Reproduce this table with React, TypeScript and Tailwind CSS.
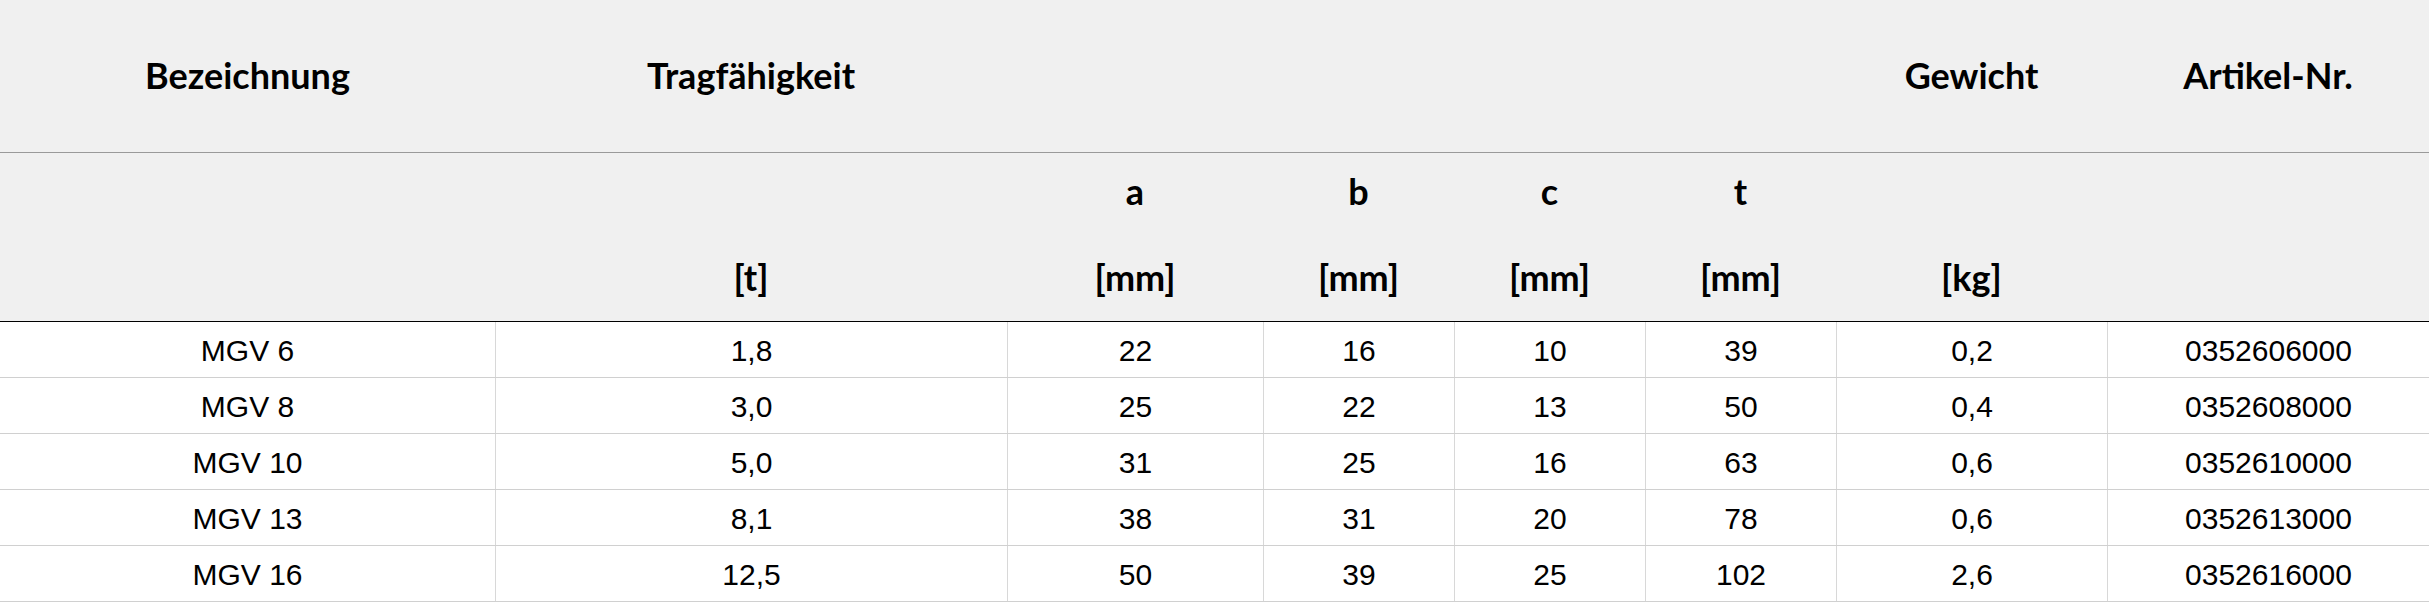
import React from "react";

const rows = [
  ["MGV 6", "1,8", "22", "16", "10", "39", "0,2", "0352606000"],
  ["MGV 8", "3,0", "25", "22", "13", "50", "0,4", "0352608000"],
  ["MGV 10", "5,0", "31", "25", "16", "63", "0,6", "0352610000"],
  ["MGV 13", "8,1", "38", "31", "20", "78", "0,6", "0352613000"],
  ["MGV 16", "12,5", "50", "39", "25", "102", "2,6", "0352616000"],
];

const top = ["Bezeichnung", "Tragfähigkeit", "", "", "", "", "Gewicht", "Artikel-Nr."];
const sym = ["", "", "a", "b", "c", "t", "", ""];
const unit = ["", "[t]", "[mm]", "[mm]", "[mm]", "[mm]", "[kg]", ""];

const cols = "grid grid-cols-[495px_512px_256px_191px_191px_191px_271px_322px]";
const head = "font-['Lato',sans-serif] font-bold text-[36px] text-black";

export default function App() {
  return (
    <div className="w-[2429px] bg-white">
      <div className={`${cols} h-[153px] bg-[#f0f0f0] border-b border-[#9a9a9a] ${head}`}>
        {top.map((t, i) => (
          <div key={i} className="flex items-center justify-center leading-none pb-[2px]">
            {t}
          </div>
        ))}
      </div>
      <div className={`${cols} h-[169px] bg-[#f0f0f0] border-b border-black ${head}`}>
        {sym.map((s, i) => (
          <div key={i} className="flex flex-col items-center">
            <div className="h-[86px] flex items-end pb-[30px] leading-none">{s}</div>
            <div className="h-[86px] flex items-end pb-[30px] leading-none">{unit[i]}</div>
          </div>
        ))}
      </div>
      {rows.map((r, ri) => (
        <div
          key={ri}
          className={`${cols} h-[56px] border-b border-[#d0d0d0] font-['Liberation_Sans',Arial,sans-serif] text-[30px] text-black`}
        >
          {r.map((c, ci) => (
            <div
              key={ci}
              className={`flex items-center justify-center leading-none pt-[2px] ${ci > 0 ? "border-l border-[#d8d8d8]" : ""}`}
            >
              {c}
            </div>
          ))}
        </div>
      ))}
    </div>
  );
}
